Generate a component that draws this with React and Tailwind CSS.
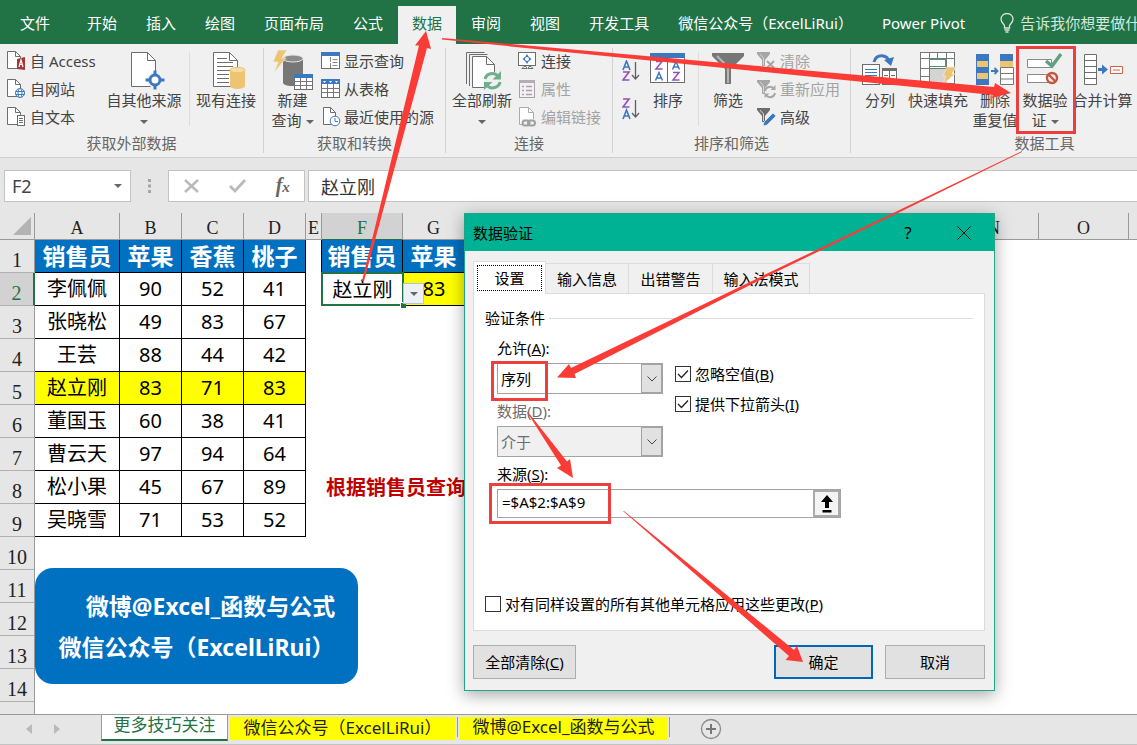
import React from "react";

const MENU = ["开始", "插入", "绘图", "页面布局", "公式", "数据", "审阅", "视图", "开发工具", "微信公众号（ExcelLiRui）", "Power Pivot"];

const PEOPLE = [
  ["李佩佩", 90, 52, 41],
  ["张晓松", 49, 83, 67],
  ["王芸", 88, 44, 42],
  ["赵立刚", 83, 71, 83],
  ["董国玉", 60, 38, 41],
  ["曹云天", 97, 94, 64],
  ["松小果", 45, 67, 89],
  ["吴晓雪", 71, 53, 52],
];

/* Sets full-width parentheses in a face that centres them in their square. */
function Label({ text }) {
  return text.split(/([（）])/).map((part, i) =>
    part === "（" || part === "）" ? <span key={i} className="font-['Noto_Sans_CJK_TC',sans-serif]">{part}</span> : part
  );
}

/* ---------- icons ---------- */

function Page({ x = 0, y = 0, w = 15, h = 18, fold = 5, stroke = "#6d6d6d" }) {
  return (
    <g fill="#fff" stroke={stroke}>
      <path d={`M${x + 0.5} ${y + 0.5}h${w - fold}l${fold} ${fold}v${h - fold}h${-w}z`} />
      <path d={`M${x + 0.5 + w - fold} ${y + 0.5}v${fold}h${fold}`} fill="none" />
    </g>
  );
}

function Small({ children }) {
  return <svg width="20" height="20" viewBox="0 0 20 20" className="shrink-0" aria-hidden="true">{children}</svg>;
}

const AccessIcon = () => (
  <Small>
    <Page w={13} h={17} />
    <path d="M10 8l8-2v13l-8-1z" fill="#a4373a" />
    <path d="M12 16l2-7 2 7M12.600 13.500h2.800" stroke="#fff" strokeWidth="1.200" fill="none" />
  </Small>
);
const WebIcon = () => (
  <Small>
    <Page w={13} h={17} />
    <g fill="#fff" stroke="#3b78bf">
      <circle cx="13" cy="14" r="4.500" />
      <ellipse cx="13" cy="14" rx="2" ry="4.500" />
      <path d="M8.500 12.500h9M8.500 15.500h9" />
    </g>
  </Small>
);
const TextIcon = () => (
  <Small>
    <Page w={13} h={17} />
    <rect x="10.500" y="8.500" width="7" height="10" fill="#fff" stroke="#6d6d6d" />
    <path d="M12 11.500h4M12 13.500h4M12 15.500h4" stroke="#6d6d6d" />
  </Small>
);
const OtherSourceIcon = () => (
  <svg width="44" height="40" viewBox="-8 0 44 40" aria-hidden="true">
    <Page x={1} y={2} w={24} h={34} fold={8} />
    <g transform="translate(25 30)">
      <circle r="8" fill="#f0f0f0" />
      <path d="M-9.500 -1.500h4v3h-4zM5.500 -1.500h4v3h-4zM-1.500 -9.500h3v4h-3zM-1.500 5.500h3v4h-3z" fill="#3b78bf" />
      <circle r="5" fill="#fff" stroke="#3b78bf" strokeWidth="3" />
    </g>
  </svg>
);
const ExistingIcon = () => (
  <svg width="42" height="40" viewBox="-6 0 42 40" aria-hidden="true">
    <Page x={2} y={2} w={24} h={34} fold={8} />
    <path d="M6 8.500h10M6 12.500h16M6 16.500h16M6 20.500h16M6 24.500h12M6 28.500h12M6 32.500h12" stroke="#6d6d6d" />
    <path d="M19 20v16a7.500 3 0 0 0 15 0v-16z" fill="#edc472" />
    <ellipse cx="26.500" cy="20" rx="7.500" ry="2.700" fill="#f6dba5" stroke="#edc472" />
  </svg>
);
const NewQueryIcon = () => (
  <svg width="40" height="40" viewBox="0 0 40 40" aria-hidden="true">
    <path d="M10 9v24c1 2.500 6 3 10 3s9-1 10-3v-24z" fill="#777" />
    <ellipse cx="20" cy="8.500" rx="10" ry="3.500" fill="#8b8b8b" stroke="#e6e6e6" />
    <path d="M5 0h9l-5 8h4L1 23l4-11H0z" fill="#edc472" stroke="#f0f0f0" strokeWidth=".6" />
    <rect x="21.500" y="24.500" width="18" height="15" fill="#fff" stroke="#6d6d6d" />
    <path d="M21 24h19v4h-19z" fill="#3b78bf" />
    <path d="M21 31.500h19M21 35.500h19M27.500 28v12M33.500 28v12" stroke="#777" />
  </svg>
);
const ShowQueryIcon = () => (
  <Small>
    <rect x=".5" y="1.500" width="18" height="16" fill="#fff" stroke="#6d6d6d" />
    <path d="M0 1h19v4H0z" fill="#3b78bf" />
    <path d="M9.500 6v11M11.500 8.500h5M11.500 11.500h5M11.500 14.500h5" stroke="#8a8a8a" strokeDasharray="5 1" />
  </Small>
);
const TableIcon = () => (
  <Small>
    <rect x=".5" y=".5" width="18" height="18" fill="#fff" stroke="#6d6d6d" />
    <path d="M0 0h19v5H0z" fill="#3b78bf" />
    <path d="M2 2h3l-1.500 2zM8 2h3l-1.500 2zM14 2h3l-1.500 2z" fill="#fff" />
    <path d="M0 9.500h19M0 13.500h19M6.500 5v14M12.500 5v14" stroke="#777" />
  </Small>
);
const RecentIcon = () => (
  <Small>
    <Page x={2} w={12} h={17} />
    <circle cx="14" cy="14" r="4.800" fill="#fff" stroke="#4472c4" />
    <path d="M14 11v3.500h3" fill="none" stroke="#4472c4" />
  </Small>
);
const RefreshAllIcon = () => (
  <svg width="40" height="40" viewBox="-2 0 40 40" aria-hidden="true">
    <path d="M2.500 34V2.500h18M5.500 36V4.500h18" fill="none" stroke="#6d6d6d" />
    <Page x={8} y={6} w={22} h={31} fold={8} />
    <circle cx="28.500" cy="31" r="9" fill="#f0f0f0" />
    <g fill="none" stroke="#6fae8f" strokeWidth="3">
      <path d="M21 29a7.500 7 0 0 1 13-3" />
      <path d="M36 32a7.500 7 0 0 1-13 3.500" />
    </g>
    <path d="M37 21v8.500h-8.500zM20 40v-8h8.500z" fill="#6fae8f" />
  </svg>
);
const ConnectionsIcon = () => (
  <Small>
    <rect x=".5" y="1.500" width="17" height="13" fill="#fff" stroke="#6d6d6d" />
    <path d="M9 3l1.500 2.500L13.500 8l-3 2.500L9 13l-1.500-2.500L4.500 8l3-2.500z" fill="#3b78bf" />
    <circle cx="9" cy="8" r="2" fill="#fff" />
    <path d="M4 17.500l2-2h2l1 2zM10 17.500l1-2h2l2 2z" fill="#fff" stroke="#6d6d6d" />
  </Small>
);
const PropertiesIcon = () => (
  <Small>
    <rect x="1.500" y="1.500" width="15" height="17" fill="#f4f0f4" stroke="#a9a1a9" />
    <path d="M1 1h16v3H1z" fill="#b5adb5" />
    <path d="M4 7.500h2M4 11.500h2M4 15.500h2M8 7.500h6M8 11.500h6M8 15.500h6" stroke="#a9a1a9" strokeWidth="1.300" />
  </Small>
);
const EditLinksIcon = () => (
  <Small>
    <Page x={1} w={14} h={17} stroke="#ababab" />
    <path d="M4 12h14v8H4z" fill="#f0f0f0" />
    <g fill="none" stroke="#a0a0a0" strokeWidth="2">
      <rect x="4.500" y="13.500" width="7" height="5" rx="2.500" />
      <rect x="10" y="13.500" width="7" height="5" rx="2.500" />
    </g>
  </Small>
);
const A = "M0 9L3.500 0L7 9M1.200 6h4.600";
const Z = "M0 0h6L0 8h6.500";
function SortGlyph({ down }) {
  return (
    <svg width="18" height="22" viewBox="0 0 18 22" aria-hidden="true">
      <g fill="none" strokeWidth="1.600">
        <path d={A} stroke="#3b78bf" transform={down ? "translate(1 12)" : "translate(1 1)"} />
        <path d={Z} stroke="#9152b5" transform={down ? "translate(1 1)" : "translate(1 12)"} />
        <path d="M13.500 2v16M10 15l3.500 4 3.500-4" stroke="#5f5f5f" strokeWidth="1.300" />
      </g>
    </svg>
  );
}
const SortIcon = () => (
  <svg width="36" height="34" viewBox="0 0 36 34" aria-hidden="true">
    <rect x=".5" y="4.500" width="34" height="28" fill="#fff" stroke="#6d6d6d" />
    <path d="M0 3h35v5H0z" fill="#3b78bf" />
    <path d="M17.500 8v25" stroke="#6d6d6d" />
    <g fill="none" strokeWidth="1.500">
      <path d="M6 11.500h6l-6 7.500h6.500M23 22.500h6l-6 7.500h6.500" stroke="#9152b5" />
      <path d="M5.500 30.500l3.500-8 3.500 8M6.700 28h4.600M22.500 19.500l3.500-8 3.500 8M23.700 17h4.600" stroke="#3b78bf" />
    </g>
  </svg>
);
const FunnelIcon = () => (
  <svg width="34" height="36" viewBox="0 0 34 36" aria-hidden="true">
    <path d="M1 3h32v3L20 19v15h-6V19L1 6z" fill="#777" />
    <path d="M6 6l11 11v16" stroke="#b5b5b5" strokeWidth="2" fill="none" />
  </svg>
);
const SmallFunnel = ({ color }) => (
  <g>
    <path d="M0 1h13v2L8 9v6H5V9L0 3z" fill={color} />
    <path d="M3 3l3.500 4v7" stroke="#d5d5d5" fill="none" />
  </g>
);
const ClearIcon = () => (
  <Small>
    <SmallFunnel color="#a6a6a6" />
    <path d="M10 10l7 7M17 10l-7 7" stroke="#a6a6a6" strokeWidth="2" />
  </Small>
);
const ReapplyIcon = () => (
  <Small>
    <SmallFunnel color="#a6a6a6" />
    <path d="M8 12a5 5 0 0 1 9-2M18 14a5 5 0 0 1-9 2" fill="none" stroke="#a6a6a6" strokeWidth="2" />
    <path d="M18.500 6v5h-5zM7.500 19v-4.500h5z" fill="#a6a6a6" />
  </Small>
);
const AdvancedIcon = () => (
  <Small>
    <SmallFunnel color="#6d6d6d" />
    <path d="M6 19l1-4 9-9 3 3-9 9z" fill="#3b78bf" stroke="#f0f0f0" strokeWidth=".7" />
  </Small>
);
const SplitIcon = () => (
  <svg width="38" height="40" viewBox="0 0 38 40" aria-hidden="true">
    <path d="M13 12c2-8 13-9 16 1" fill="none" stroke="#3b78bf" strokeWidth="3" />
    <path d="M23 10l7 6 3-9z" fill="#3b78bf" />
    <rect x="1.500" y="14.500" width="17" height="20" fill="#fff" stroke="#6d6d6d" />
    <path d="M4 19.500h12M4 22.500h12M4 25.500h12M4 28.500h12" stroke="#3b78bf" />
    <rect x="21.500" y="18.500" width="14" height="16" fill="#fff" stroke="#6d6d6d" />
    <path d="M21 18h15v3h-15z" fill="#6d6d6d" />
    <path d="M28.500 18v17M23 25.500h4M30 25.500h4M23 29.500h4M30 29.500h4" stroke="#6d6d6d" />
  </svg>
);
const FlashFillIcon = () => (
  <svg width="38" height="40" viewBox="0 0 38 40" aria-hidden="true">
    <rect x="1.500" y="2.500" width="34" height="31" fill="#fff" stroke="#777" />
    <path d="M10 18h18v16H10z" fill="#d4d4d4" />
    <path d="M1 8.500h35M1 18.500h35M1 26.500h9M10.500 2v32M18.500 2v6M27.500 2v16" stroke="#777" />
    <rect x="10.500" y="9.500" width="16" height="7" fill="#fff" stroke="#4a9a75" />
    <path d="M28 17h9l-4 7h3L24 34l3-8h-3z" fill="#edc472" stroke="#f0f0f0" strokeWidth=".6" />
  </svg>
);
const DedupeIcon = () => (
  <svg width="40" height="40" viewBox="0 0 40 40" aria-hidden="true">
    <path d="M1 4h13v31H1zM25 4h13v7H25z" fill="#3b78bf" />
    <path d="M2 11h11v6H2zM2 23h11v6H2zM25 11h13v6H25z" fill="#edc472" />
    <path d="M25.500 17.500h13v17h-13zM25 23.500h13M25 29h13" fill="#fff" stroke="#777" />
    <path d="M16 21h6M19.500 18l3 3-3 3" stroke="#3b78bf" strokeWidth="1.800" fill="none" />
  </svg>
);
const ValidationIcon = () => (
  <svg width="38" height="40" viewBox="0 0 38 40" aria-hidden="true">
    <path d="M1.500 9.500h24v8h-24zM1.500 24.500h24v8h-24z" fill="#fff" stroke="#8a8a8a" />
    <path d="M20 11l6 5 9-12" fill="none" stroke="#5fa283" strokeWidth="3.500" />
    <circle cx="26" cy="28" r="5" fill="#f0f0f0" stroke="#c8553f" strokeWidth="2.400" />
    <path d="M22.500 24.500l7 7" stroke="#c8553f" strokeWidth="2.400" />
  </svg>
);
const ConsolidateIcon = () => (
  <svg width="40" height="40" viewBox="0 0 40 40" aria-hidden="true">
    <path d="M1.500 4.500h12v30h-12zM1 10.500h12M1 16.500h12M1 22.500h12M1 28.500h12" fill="#fff" stroke="#6d6d6d" />
    <path d="M15 19.500h7" stroke="#3b78bf" strokeWidth="3" />
    <path d="M19 14.500l6 5-6 5z" fill="#3b78bf" />
    <path d="M27.500 16.500h12v7h-12zM30 20h7" fill="#fff" stroke="#d2604d" />
  </svg>
);

/* ---------- ribbon parts ---------- */

function Caret() {
  return <svg width="8" height="4" viewBox="0 0 8 4" className="inline-block align-middle" aria-hidden="true"><path d="M0 0h8L4 4z" fill="#666" /></svg>;
}

function Big({ icon, lines, caret, className }) {
  return (
    <button type="button" className={`flex shrink-0 flex-col items-center pt-[2px] text-[15px] leading-5 whitespace-nowrap text-[#444] ${className}`}>
      <span className="flex h-10 items-start justify-center">{icon}</span>
      {lines.map((l, i) => (
        <span key={l}>
          {l}
          {caret === "inline" && i === lines.length - 1 && <span className="ml-1"><Caret /></span>}
        </span>
      ))}
      {caret === "below" && <span><Caret /></span>}
    </button>
  );
}

function SmallList({ items, className = "" }) {
  return (
    <div className={`flex shrink-0 flex-col ${className}`}>
      {items.map(([icon, text, off]) => (
        <button key={text} type="button" disabled={off} className="flex h-7 items-center gap-[3px] pb-[2px] text-[15px] leading-5 whitespace-nowrap text-[#444] disabled:text-[#a3a3a3]">
          {icon}
          {text}
        </button>
      ))}
    </div>
  );
}

function Group({ label, className, children }) {
  return (
    <section aria-label={label} className={`my-1 flex shrink-0 flex-col border-r border-[#d2d2d2] ${className}`}>
      <div className="flex h-[88px]">{children}</div>
      <div className="text-center text-[15px] leading-5 text-[#666]">{label}</div>
    </section>
  );
}

const Rule = () => <div className="my-1 h-[74px] w-px shrink-0 bg-[#dedede]" />;

function Ribbon() {
  return (
    <div className="flex h-[114px] shrink-0 overflow-hidden border-b border-[#cfcfcf] bg-[#f0f0f0]">
      <Group label="获取外部数据" className="w-[264px]">
        <SmallList className="w-[99px] pl-[7px]" items={[[<AccessIcon />, "自 Access"], [<WebIcon />, "自网站"], [<TextIcon />, "自文本"]]} />
        <Big className="w-[90px]" icon={<OtherSourceIcon />} lines={["自其他来源"]} caret="below" />
        <Rule />
        <Big className="w-[72px]" icon={<ExistingIcon />} lines={["现有连接"]} />
      </Group>
      <Group label="获取和转换" className="w-[182px]">
        <Big className="w-[57px]" icon={<NewQueryIcon />} lines={["新建", "查询"]} caret="inline" />
        <SmallList items={[[<ShowQueryIcon />, "显示查询"], [<TableIcon />, "从表格"], [<RecentIcon />, "最近使用的源"]]} />
      </Group>
      <Group label="连接" className="w-[167px]">
        <Big className="w-[72px]" icon={<RefreshAllIcon />} lines={["全部刷新"]} caret="below" />
        <SmallList items={[[<ConnectionsIcon />, "连接"], [<PropertiesIcon />, "属性", true], [<EditLinksIcon />, "编辑链接", true]]} />
      </Group>
      <Group label="排序和筛选" className="w-[238px]">
        <div className="flex w-[35px] shrink-0 flex-col items-center gap-4 pt-[12px]">
          <button type="button" aria-label="升序"><SortGlyph /></button>
          <button type="button" aria-label="降序"><SortGlyph down /></button>
        </div>
        <Big className="w-[40px]" icon={<SortIcon />} lines={["排序"]} />
        <div className="w-[10px] shrink-0" />
        <Rule />
        <Big className="w-[58px]" icon={<FunnelIcon />} lines={["筛选"]} />
        <SmallList items={[[<ClearIcon />, "清除", true], [<ReapplyIcon />, "重新应用", true], [<AdvancedIcon />, "高级"]]} />
      </Group>
      <Group label="数据工具" className="w-[388px]">
        <Big className="w-[58px]" icon={<SplitIcon />} lines={["分列"]} />
        <Big className="w-[58px]" icon={<FlashFillIcon />} lines={["快速填充"]} />
        <Big className="w-[56px]" icon={<DedupeIcon />} lines={["删除", "重复值"]} />
        <Big className="w-[44px]" icon={<ValidationIcon />} lines={["数据验", "证"]} caret="inline" />
        <Big className="w-[71px]" icon={<ConsolidateIcon />} lines={["合并计算"]} />
      </Group>
    </div>
  );
}

/* ---------- sheet ---------- */

const HEAD = "border-r border-b border-black border-r-black bg-[#0070c0] text-[23px] font-bold text-white";
const CELL = "border-r border-b border-black text-[20px]";

function Sheet() {
  const cols = ["A", "B", "C", "D", "E", "F", "G", "", "", "", "", "", "", "N", "O", ""];
  return (
    <div className="min-h-0 flex-1 overflow-hidden bg-white">
      <table className="w-[1220px] table-fixed border-separate border-spacing-0 text-center leading-8 whitespace-nowrap text-black">
        <colgroup>
          <col className="w-[35px]" />
          <col className="w-[85px]" />
          <col className="w-[62px]" />
          <col className="w-[62px]" />
          <col className="w-[62px]" />
          <col className="w-[16px]" />
          <col className="w-[81px]" />
          <col className="w-[62px]" />
          <col className="w-[80px]" />
          <col className="w-[80px]" />
          <col className="w-[80px]" />
          <col className="w-[80px]" />
          <col className="w-[80px]" />
          <col className="w-[84px]" />
          <col className="w-[90px]" />
          <col className="w-[90px]" />
          <col />
        </colgroup>
        <thead>
          <tr className="h-[27px] font-['Liberation_Serif','Noto_Serif_CJK_SC',serif] text-[18px] leading-[22px]">
            <th className="border-r border-b border-[#9a9a9a] bg-[#e6e6e6] p-0">
              <svg width="20" height="20" viewBox="0 0 20 20" className="ml-3 block" aria-hidden="true"><path d="M19 1v18H1z" fill="#b3b3b3" /></svg>
            </th>
            {cols.map((c, i) => (
              <th key={i} className={c === "F" ? "border-r border-b border-r-[#9a9a9a] border-b-[#217346] bg-[#d2d2d2] p-0 pt-1 font-normal text-[#217346]" : "border-r border-b border-[#9a9a9a] bg-[#e6e6e6] p-0 pt-1 font-normal text-[#222]"}>
                {c}
              </th>
            ))}
          </tr>
        </thead>
        <tbody>
          {Array.from({ length: 15 }, (_, i) => i + 1).map((n) => {
            const person = n >= 2 ? PEOPLE[n - 2] : null;
            const yellow = n === 5 ? "bg-[#ffff00]" : "";
            return (
              <tr key={n} className="h-[33px]">
                <th className={`border-r border-b p-0 pt-2 font-['Liberation_Serif',serif] text-[20px] leading-6 font-normal ${n === 2 ? "border-r-2 border-r-[#217346] border-b-[#b0b0b0] bg-[#d2d2d2] text-[#217346]" : "border-[#b0b0b0] border-r-[#9a9a9a] bg-[#e6e6e6] text-[#222]"}`}>{n < 15 ? n : ""}</th>
                {n === 1 && ["销售员", "苹果", "香蕉", "桃子"].map((t) => <th key={t} className={`${HEAD} p-0`}>{t}</th>)}
                {person && person.map((v, j) => <td key={j} className={`${CELL} p-0 ${yellow}`}>{v}</td>)}
                {n > 9 && <td colSpan={4} />}
                <td className={n === 1 || n === 2 ? "border-r border-black p-0" : "p-0"} />
                {n === 1 && (
                  <>
                    <th className={`${HEAD} p-0`}>销售员</th>
                    <th className={`${HEAD} p-0`}>苹果</th>
                  </>
                )}
                {n === 2 && (
                  <>
                    <td className="relative p-0 text-[20px]">
                      赵立刚
                      <span className="absolute -inset-x-px -top-px bottom-0 border-2 border-[#217346]" />
                      <span className="absolute -right-[3px] -bottom-[2px] h-[6px] w-[6px] border-t border-l border-white bg-[#217346]" />
                      <button type="button" aria-label="下拉列表" className="absolute bottom-[2px] left-full z-10 flex h-[21px] w-[21px] items-center justify-center border border-[#bcc3ce] bg-[#edf0f5]"><Caret /></button>
                    </td>
                    <td className="border-b border-black bg-[#ffff00] p-0 text-[20px]">83</td>
                  </>
                )}
                {n === 8 && <td className="overflow-visible p-0 pl-1 text-left text-[20px] font-bold text-[#c00000]">根据销售员查询</td>}
              </tr>
            );
          })}
        </tbody>
      </table>
    </div>
  );
}

function FormulaBar() {
  return (
    <div className="flex h-[55px] shrink-0 items-start bg-[#e6e6e6] pt-3 pl-1">
      <div className="flex h-8 w-[127px] items-center justify-between border border-[#c3c3c3] bg-white pr-2 pl-[7px]">
        <input aria-label="名称框" defaultValue="F2" className="w-20 bg-transparent text-[18px] leading-6 text-[#444] outline-none" />
        <Caret />
      </div>
      <svg width="37" height="32" viewBox="0 0 37 32" aria-hidden="true"><path d="M17 9h3v3h-3zM17 14.500h3v3h-3zM17 20h3v3h-3z" fill="#a6a6a6" /></svg>
      <div className="flex h-8 w-[137px] items-center justify-around border border-[#c3c3c3] bg-white">
        <button type="button" aria-label="取消输入"><svg width="18" height="16" viewBox="0 0 18 16"><path d="M2 2l13 12M15 2L2 14" stroke="#b9b9b9" strokeWidth="2.400" /></svg></button>
        <button type="button" aria-label="确认输入"><svg width="18" height="16" viewBox="0 0 18 16"><path d="M1 8l5 5L16 2" stroke="#b9b9b9" strokeWidth="2.800" fill="none" /></svg></button>
        <button type="button" className="font-['Liberation_Serif',serif] text-[20px] leading-6 font-bold text-[#666] italic">f<span className="text-[15px]">x</span></button>
      </div>
      <input aria-label="编辑栏" defaultValue="赵立刚" className="ml-[3px] h-8 min-w-0 flex-1 border border-r-0 border-[#c3c3c3] bg-white pl-3 text-[18px] leading-6 text-[#333] outline-none" />
    </div>
  );
}

function SheetTabs() {
  return (
    <div className="flex h-[31px] shrink-0 items-start border-t border-b border-t-[#9a9a9a] border-b-[#c3c3c3] bg-[#e6e6e6] text-[17px] leading-5 whitespace-nowrap">
      <div className="flex h-7 w-[101px] shrink-0 items-center justify-center gap-[22px] pr-4">
        <svg width="6" height="10" viewBox="0 0 6 10" aria-hidden="true"><path d="M6 0v10L0 5z" fill="#b9b9b9" /></svg>
        <svg width="6" height="10" viewBox="0 0 6 10" aria-hidden="true"><path d="M0 0v10l6-5z" fill="#b9b9b9" /></svg>
      </div>
      <button type="button" className="h-[26px] w-[127px] shrink-0 border-x border-b-2 border-x-[#9a9a9a] border-b-[#217346] bg-white pb-1 text-[#217346]">更多技巧关注</button>
      <button type="button" className="ml-[2px] h-[25px] w-[225px] shrink-0 border-t-2 border-[#e6e6e6] bg-[#ffff00] pb-[5px] text-[#222]"><Label text="微信公众号（ExcelLiRui）" /></button>
      <div className="mx-[2px] mt-[2px] h-5 w-px bg-[#9a9a9a]" />
      <button type="button" className="h-[25px] w-[207px] shrink-0 border-t-2 border-[#e6e6e6] bg-[#ffff00] pb-[5px] text-[#222]">微博@Excel_函数与公式</button>
      <div className="mx-[2px] mt-[2px] h-5 w-px bg-[#9a9a9a]" />
      <button type="button" aria-label="新工作表" className="mt-[3px] ml-7">
        <svg width="22" height="22" viewBox="0 0 22 22"><circle cx="11" cy="11" r="9.500" fill="none" stroke="#8a8a8a" strokeWidth="1.300" /><path d="M11 6v10M6 11h10" stroke="#777" strokeWidth="2" /></svg>
      </button>
    </div>
  );
}

/* ---------- dialog ---------- */

function Check({ id, checked, children }) {
  return (
    <label htmlFor={id} className="flex h-5 w-fit items-center gap-1 whitespace-nowrap">
      <span className="grid h-4 w-4 place-items-center">
        <input id={id} type="checkbox" defaultChecked={checked} className="peer col-start-1 row-start-1 h-4 w-4 appearance-none border border-[#333] bg-white" />
        <svg width="12" height="12" viewBox="0 0 12 12" className="pointer-events-none invisible col-start-1 row-start-1 peer-checked:visible"><path d="M1 6l3.500 3.500L11 2.500" fill="none" stroke="#222" strokeWidth="1.300" /></svg>
      </span>
      <span>{children}</span>
    </label>
  );
}

function Combo({ id, value, disabled }) {
  return (
    <div className={`grid h-[31px] w-[166px] border border-[#a3a3a3] ${disabled ? "bg-[#f0f0f0]" : "bg-white"}`}>
      <select id={id} disabled={disabled} className="col-start-1 row-start-1 w-full appearance-none pr-6 pl-[3px] text-[15px] text-black opacity-100 outline-none disabled:text-[#6d6d6d]">
        <option>{value}</option>
      </select>
      <span className="pointer-events-none col-start-1 row-start-1 flex w-[21px] items-center justify-center justify-self-end border border-[#a3a3a3] bg-[#e1e1e1]">
        <svg width="10" height="6" viewBox="0 0 10 6"><path d="M.5 .5L5 5 9.500 .5" fill="none" stroke="#444" /></svg>
      </span>
    </div>
  );
}

function Dialog() {
  const btn = "h-[34px] border border-[#adadad] bg-[#e1e1e1]";
  return (
    <div role="dialog" aria-label="数据验证" className="absolute top-[213px] left-[464px] flex h-[478px] w-[531px] flex-col border border-[#1fa58a] bg-[#f0f0f0] text-[15px] leading-5 text-black shadow-[0_4px_16px_rgba(0,0,0,0.35)]">
      <div className="flex h-[37px] items-center bg-[#00b294] pl-2">
        <span className="flex-1">数据验证</span>
        <button type="button" className="w-12 text-[17px]">?</button>
        <button type="button" aria-label="关闭" className="mr-[2px] ml-1 flex w-14 justify-center"><svg width="14" height="14" viewBox="0 0 14 14"><path d="M.5 .5l13 13M13.500 .5l-13 13" stroke="#111" /></svg></button>
      </div>
      <div className="flex flex-1 flex-col pt-[10px] pr-[9px] pb-[11px] pl-2">
        <div role="tablist" className="flex h-8 items-end">
          <button type="button" role="tab" aria-selected="true" className="z-10 -mb-px h-[33px] w-[73px] border border-b-0 border-[#dcdcdc] bg-white p-[3px]">
            <span className="flex h-full items-center justify-center border border-dotted border-black">设置</span>
          </button>
          <button type="button" role="tab" aria-selected="false" className="h-[30px] w-[83px] border-t border-r border-[#dcdcdc]">输入信息</button>
          <button type="button" role="tab" aria-selected="false" className="h-[30px] w-[84px] border-t border-r border-[#dcdcdc]">出错警告</button>
          <button type="button" role="tab" aria-selected="false" className="h-[30px] w-[97px] border-t border-r border-[#dcdcdc]">输入法模式</button>
        </div>
        <div className="flex h-[338px] flex-col border border-[#dcdcdc] bg-white px-[11px] pt-[14px]">
          <div className="flex items-center gap-1">
            <span>验证条件</span>
            <div className="h-px flex-1 bg-[#dcdcdc]" />
          </div>
          <div className="mt-[10px] flex gap-3 pl-3">
            <div className="flex flex-col">
              <label htmlFor="allow" className="mb-[5px]">允许(<u>A</u>):</label>
              <Combo id="allow" value="序列" />
              <label htmlFor="data" className="mt-[7px] mb-[5px] text-[#6d6d6d]">数据(<u>D</u>):</label>
              <Combo id="data" value="介于" disabled />
            </div>
            <div className="flex flex-col gap-[10px] pt-[26px]">
              <Check id="ignore" checked>忽略空值(<u>B</u>)</Check>
              <Check id="dropdown" checked>提供下拉箭头(<u>I</u>)</Check>
            </div>
          </div>
          <div className="mt-[7px] flex flex-col gap-[5px] pl-3">
            <label htmlFor="source">来源(<u>S</u>):</label>
            <div className="flex h-[29px] w-[344px] border border-[#a3a3a3]">
              <input id="source" defaultValue="=$A$2:$A$9" className="min-w-0 flex-1 pb-1 pl-1 text-[15px] outline-none" />
              <button type="button" aria-label="选择区域" className="flex w-[27px] items-center justify-center border-2 border-[#a9a9a9] bg-[#f4f4f4]">
                <svg width="12" height="18" viewBox="0 0 12 18"><path d="M6 0l6 7H8v6H4V7H0zM1.500 15h9v2.500h-9z" fill="#000" /></svg>
              </button>
            </div>
          </div>
          <div className="mt-auto pb-4">
            <Check id="apply">对有同样设置的所有其他单元格应用这些更改(<u>P</u>)</Check>
          </div>
        </div>
        <div className="mt-auto flex items-center">
          <button type="button" className={`${btn} w-[103px]`}>全部清除(<u>C</u>)</button>
          <button type="button" className="ml-auto h-[34px] w-[99px] border-2 border-[#0067b8] bg-[#e1e1e1]">确定</button>
          <button type="button" className={`${btn} ml-3 w-[100px]`}>取消</button>
        </div>
      </div>
    </div>
  );
}

function Annotations() {
  return (
    <svg width="1137" height="745" viewBox="0 0 1137 745" className="pointer-events-none absolute top-0 left-0 z-20" aria-hidden="true">
      <g fill="#fb3b36">
        <path d="M362 281L419 45.500 415 45.500 426 31 431 49 427 48 364 281z" />
        <path d="M442 38L994 87 995 83 1011 93 992 98 993 95 442 39.500z" />
        <path d="M1022 151L571 368 569 364 557 377.500 576 378 574.500 374 770 275 900 212 1022 152z" />
        <path d="M527 412L561 465.500 557 468 573 478 570 459 567 461.500 528 412z" />
        <path d="M623 511L789 656 785.500 660 803 662 797 646 794 650 624 511z" />
      </g>
      <g fill="none" stroke="#ee3f3f" strokeWidth="3">
        <path d="M1017.500 47.500h57v85h-57z" />
        <path d="M492.500 362.500h54v37h-54z" />
        <path d="M490.500 484.500h119v38h-119z" />
      </g>
    </svg>
  );
}

export default function App() {
  return (
    <div className="relative flex h-screen flex-col overflow-hidden bg-[#e6e6e6] font-['Noto_Sans','Noto_Sans_CJK_SC',sans-serif]">
      <nav className="flex h-11 shrink-0 items-end gap-px overflow-hidden bg-[#217346] text-[15px] leading-5 whitespace-nowrap text-white">
        <button type="button" className="h-[38px] w-[72px] shrink-0 pr-[2px] pb-1">文件</button>
        {MENU.map((m) => (
          <button key={m} type="button" className={`h-[38px] shrink-0 px-[14px] pb-1 ${m === "数据" ? "bg-[#f0f0f0] text-[#217346]" : ""}`}><Label text={m} /></button>
        ))}
        <button type="button" className="ml-5 flex h-[38px] shrink-0 items-center gap-[6px] pb-1 text-[#d5e8dc]">
          <svg width="14" height="20" viewBox="0 0 14 20" fill="none" stroke="currentColor" strokeWidth="1.300" aria-hidden="true"><path d="M4.500 15v-2c0-2-3.500-3-3.500-7a6 5.500 0 0 1 12 0c0 4-3.500 5-3.500 7v2zM4.500 17h5M5.500 19h3" /></svg>
          告诉我你想要做什
        </button>
      </nav>
      <Ribbon />
      <FormulaBar />
      <Sheet />
      <SheetTabs />
      <div className="absolute top-[568px] left-[35px] flex h-[116px] w-[323px] flex-col items-center justify-center rounded-[18px] bg-[#0070c0] text-[23px] leading-10 font-bold whitespace-nowrap text-white">
        <p className="pl-7">微博@Excel_函数与公式</p>
        <p><Label text="微信公众号（ExcelLiRui）" /></p>
      </div>
      <Dialog />
      <Annotations />
    </div>
  );
}
